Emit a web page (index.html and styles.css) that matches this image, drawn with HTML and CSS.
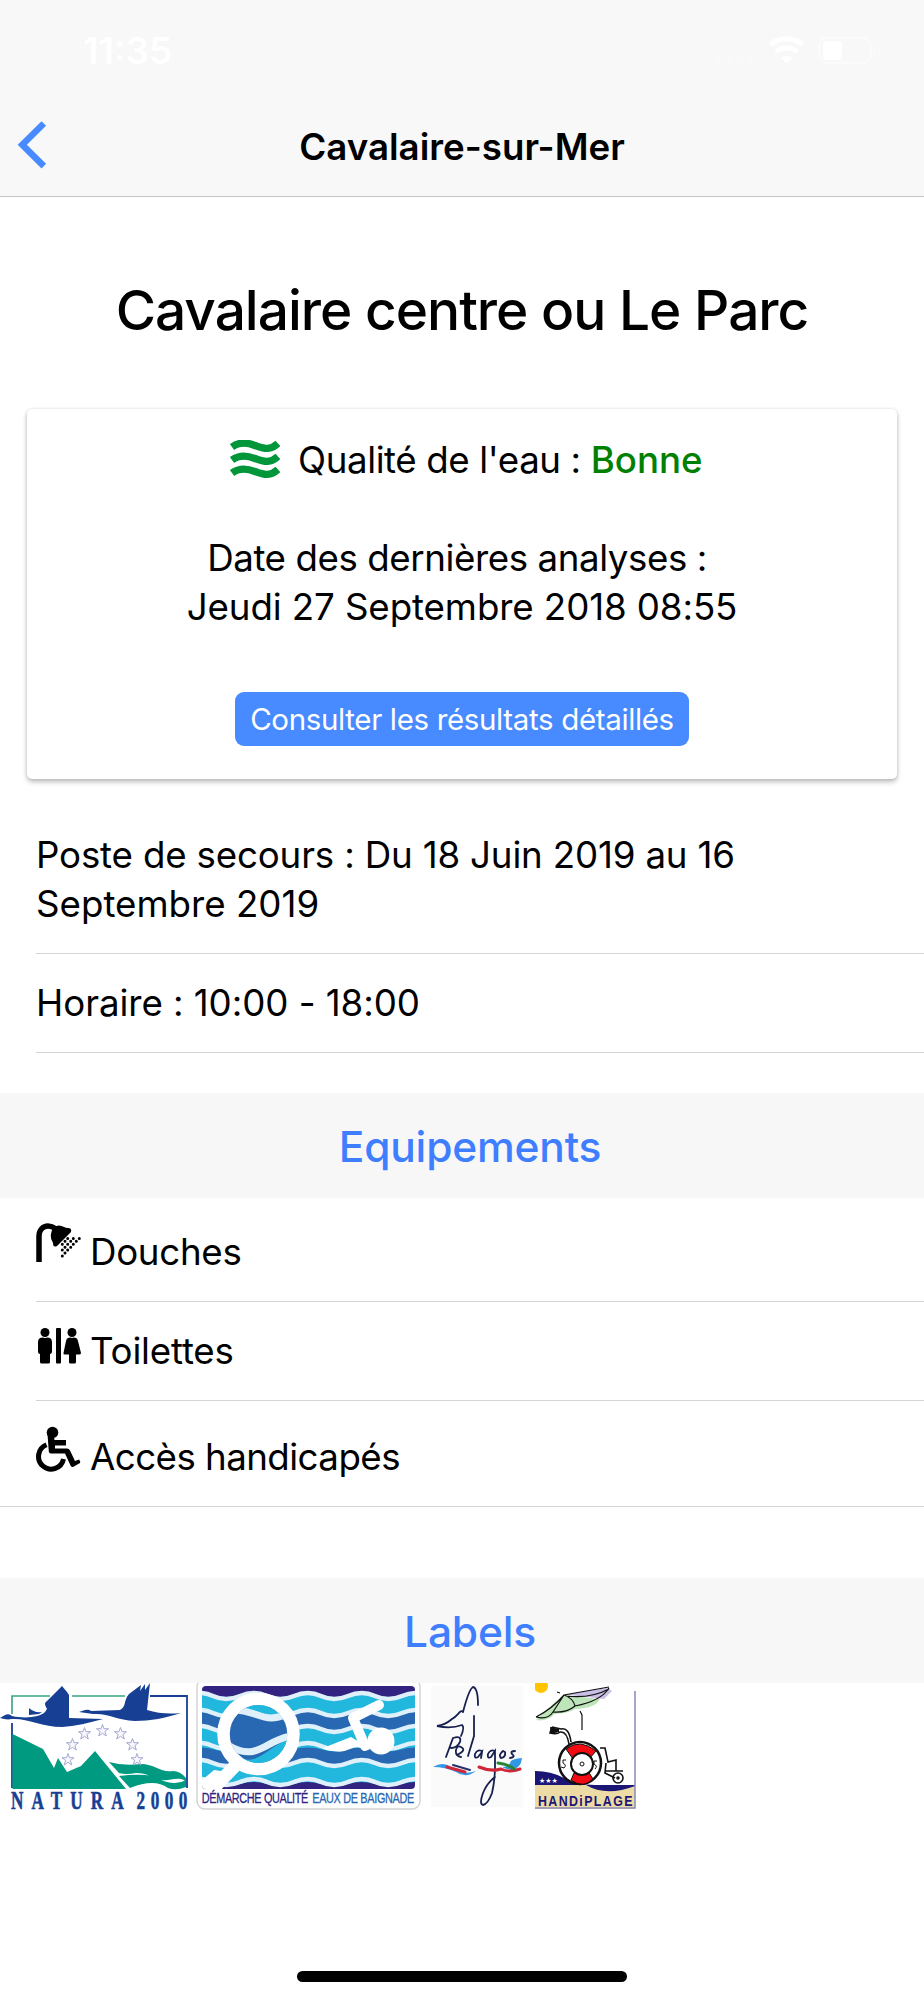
FILE: index.html
```
<!DOCTYPE html>
<html lang="fr">
<head>
    <meta charset="UTF-8">
    <title>Cavalaire-sur-Mer</title>
    <link rel="stylesheet" href="styles.css">
</head>
<body>
    <header class="header">
        <div class="status">
            <span class="time">11:35</span>
            <svg class="status-icons" width="170" height="40" viewBox="0 0 170 40">
                <g fill="#f9f9f9">
                    <circle cx="3" cy="29" r="3"/><circle cx="14" cy="29" r="3"/><circle cx="25" cy="29" r="3"/><circle cx="36" cy="29" r="3"/>
                </g>
                <g fill="none" stroke="#fff" stroke-width="5">
                    <path d="M55 15a25 25 0 0 1 33 0"/>
                    <path d="M61 22a16 16 0 0 1 21 0"/>
                </g>
                <path d="M66 28q5.500-4 11 0l-5.500 5z" fill="#fff"/>
                <rect x="104.500" y="8" width="51" height="25" rx="7" fill="none" stroke="#fbfbfb" stroke-width="2.500"/>
                <rect x="108" y="11" width="19" height="19" rx="4" fill="#fff"/>
                <path d="M159 17q3 3.500 0 8z" fill="#fbfbfb"/>
            </svg>
        </div>
        <div class="navbar">
            <svg class="back" width="30" height="50" viewBox="0 0 30 50"><path d="M25.800 2.500L4.300 23.800l21.500 21.300" fill="none" stroke="#488aff" stroke-width="6.500"/></svg>
            <div class="nav-title"><span>Cavalaire-sur-Mer</span></div>
        </div>
    </header>

    <h1><span>Cavalaire centre ou Le Parc</span></h1>

    <div class="card">
        <div class="quality">
            <svg width="50" height="40" viewBox="0 0 50 40" fill="none" stroke="#009639" stroke-width="7.300">
                <path d="M2 7C8 2.500 15 1.500 25 5.500S41 10 48 3.500"/>
                <path d="M2 20C8 15.500 15 14.500 25 18.500S41 23 48 16.500"/>
                <path d="M2 33C8 28.500 15 27.500 25 31.500S41 36 48 29.500"/>
            </svg>
            <span class="q-label">Qualité de l'eau :</span> <span class="good">Bonne</span>
        </div>
        <p class="date"><span class="d1">Date des dernières analyses :&nbsp;</span><br><span class="d2">Jeudi 27 Septembre 2018 08:55</span></p>
        <button>Consulter les résultats détaillés</button>
    </div>

    <div class="list infos">
        <div class="item poste"><span>Poste de secours : Du 18 Juin 2019 au 16</span><br>Septembre 2019</div>
        <div class="item horaire">Horaire : 10:00 - 18:00</div>
    </div>

    <h2 class="divider equip"><span>Equipements</span></h2>
    <div class="list equipements">
        <div class="item douches">
            <svg width="46" height="40" viewBox="0 0 46 40">
                <path d="M3 39V13C3 7 7 3 12 3q4 0 8 3" fill="none" stroke="#000" stroke-width="5.500"/>
                <path d="M18 4q5-3 10 0 2 1 4 1 4 0 3 4L21 23q-4 2-4-3-5-8 1-16z"/>
                <path d="M31.700 15.500h.01M37.300 15.500h.01M43.300 15.500h.01M29 18.300h.01M34.700 18.300h.01M40.300 18.300h.01M26.300 21.300h.01M31.700 21.300h.01M37.300 21.300h.01M29 24.300h.01M34.700 24.300h.01M26.300 27h.01M31.700 27h.01M29 30h.01M26.300 33h.01" stroke="#000" stroke-width="3" stroke-linecap="round"/>
            </svg>
            <span>Douches</span>
        </div>
        <div class="item toilettes">
            <svg width="46" height="40" viewBox="0 0 46 40">
                <circle cx="9" cy="6.500" r="4.500"/>
                <path d="M4 12q2-1 5 0 3-1 5 0 2 1 2 4v9q0 3-2 3v8q0 1.500-1.500 1.500h-7Q4 37.500 4 36v-8q-2 0-2-3v-9q0-3 2-4z"/>
                <rect x="20" y="2" width="5" height="35.500" rx="1"/>
                <circle cx="36" cy="6.500" r="4.500"/>
                <path d="M32 12q2-1 4 0 2-1 4 0 1.500.5 2 3l3 12q0 1.500-2 1.500h-3V36q0 1.500-1.500 1.500h-4Q33 37.500 33 36v-7.500h-4q-2 0-1.500-1.500L30 15q.5-2.500 2-3z"/>
            </svg>
            <span>Toilettes</span>
        </div>
        <div class="item acces">
            <svg width="46" height="46" viewBox="0 0 46 46">
                <circle cx="16.500" cy="6.500" r="5.800"/>
                <path d="M11.500 8h6l1 6H30v5.500H19v3h12q2 0 3 2l5 10.500 4-1.500q2 2 1 3.500L37 41q-1.500.5-2.500-1.500L29 27.500H15q-2 0-2.200-2z"/>
                <path d="M10.500 18.800A12.600 12.600 0 1 0 27.500 33" fill="none" stroke="#000" stroke-width="5"/>
            </svg>
            <span>Accès handicapés</span>
        </div>
    </div>

    <h2 class="divider labels-title"><span>Labels</span></h2>
    <div class="labels">
        <!-- Natura 2000 -->
        <svg width="190" height="140" viewBox="0 0 190 140">
            <path d="M12 31V13h38M72 13h53" fill="none" stroke="#35a583" stroke-width="1.600"/>
            <path d="M12 40v65M150 13h37v92" fill="none" stroke="#173f94" stroke-width="1.800"/>
            <path d="M12.500 51L43 66l11 19 4-10 9 14 14-6 14-15 31 38H12.500z" fill="#009a80"/>
            <path d="M109 79q14 4 32 2c14 0 20 9 32 7q7 0 13 7v3c-8-5-16 0-24-1-12-3-14-7-26-7q-10 2-17 0zM119 93q15-2 26-1c10 0 20 9 30 8q6 0 11-3v7q-10 4-18 1c-10-7-22-6-38 0z" fill="#009a80"/>
            <g fill="#173f94">
                <path d="M0 35l5-3q4-2 7 1c14 3 28 1 33-4l2-3q-4-6 0-8L62 3l5 6 2 3v23l34 1c-14 4-28 7-41 8-20 0-35-9-50-8-5 1-8 0-12-1zM29 25q5 5 13 4l-3 2-10 1z"/>
                <path d="M79 29l6-2q4-1 6 1l29-1c7-4 3-9 9-16L141 2l-1 6 5-7v6l5-7-3 27q16 5 34 3c-15 5-31 8-46 8-19-1-26-8-42-7z"/>
            </g>
            <g fill="#f7f7fc" stroke="#a6a8d6" stroke-width="1">
                <path id="star" transform="translate(102.500 47.500)" d="M0-6l1.500 4.200H6L2.400 1l1.400 4.500L0 2.800-3.800 5.500-2.400 1-6-1.800h4.500z"/>
                <use href="#star" x="-18" y="3"/><use href="#star" x="18" y="3"/>
                <use href="#star" x="-30" y="14"/><use href="#star" x="30" y="14"/>
                <use href="#star" x="-34.500" y="29"/><use href="#star" x="34.500" y="29"/>
            </g>
            <g class="natura-text" transform="scale(.66 1)"><text x="16.500" y="126.500" textLength="171" lengthAdjust="spacing">NATURA</text><text x="207" y="126.500" textLength="77" lengthAdjust="spacing">2000</text></g>
        </svg>
        <!-- Eaux de baignade -->
        <svg width="226" height="130" viewBox="0 0 226 130">
            <rect x="1" y="-4" width="223" height="130" rx="8" fill="#fff" stroke="#d2d2d2" stroke-width="1.400"/>
            <clipPath id="panel"><rect x="6" y="3" width="213" height="103" rx="4"/></clipPath>
            <g clip-path="url(#panel)">
                <rect x="6" y="3" width="213" height="103" fill="#31237f"/>
                <g fill="none">
                    <path d="M-10 12q14-4 27 0t27 0 27 0 27 0 27 0 27 0 27 0 27 0 27 0V101q-14-4-27 0t-27 0-27 0-27 0-27 0-27 0-27 0-27 0-27 0z" fill="#22b8de"/>
                    <path d="M-10 38q14-4 27 0t27 0 27 0 27 0 27 0 27 0 27 0 27 0 27 0" stroke="#2867b2" stroke-width="14"/>
                    <path d="M-10 73q14-4 27 0t27 0 27 0 27 0 27 0 27 0 27 0 27 0 27 0" stroke="#2867b2" stroke-width="13"/>
                    <g stroke="#dff0fb" stroke-width="4.500">
                        <path id="foam" d="M-10 13q14-6 27 0t27 0 27 0 27 0 27 0 27 0 27 0 27 0 27 0"/>
                        <use href="#foam" y="17"/><use href="#foam" y="33"/><use href="#foam" y="50"/><use href="#foam" y="67"/><use href="#foam" y="86"/>
                    </g>
                </g>
                <circle cx="62.500" cy="51" r="35" fill="#2867b2" stroke="#fff" stroke-width="12.500"/>
                <clipPath id="lens"><circle cx="62.500" cy="51" r="29"/></clipPath>
                <g clip-path="url(#lens)">
                    <path d="M30 20h66v9q-20 8-34 2-12-5-32-6z" fill="#22b8de"/>
                    <path d="M30 64c30 30 38-2 66-8v30H30z" fill="#22b8de"/>
                    <path d="M35 27c28-1 32 17 60 2M30 61c32 20 38-4 65-8" fill="none" stroke="#dff0fb" stroke-width="7"/>
                </g>
                <path d="M37 76l8 10-25 26H-2V104l20-17 7 1z" fill="#fff"/>
                <path d="M183 22l-26 13 12 28" fill="none" stroke="#fff" stroke-width="10" stroke-linecap="round" stroke-linejoin="round"/>
                <path d="M127 65l28-11 20 12-5 1q-8-5-16-1t-16 2q-7 0-11-3z" fill="#fff"/>
                <circle cx="185" cy="58" r="13.500" fill="#fff"/>
            </g>
            <g class="eaux-text" transform="scale(.75 1)">
                <text x="7.800" y="120.500" fill="#31237f" stroke="#31237f" textLength="142" lengthAdjust="spacing">DÉMARCHE QUALITÉ</text>
                <text x="155" y="120.500" fill="#2867b2" stroke="#2867b2" textLength="136" lengthAdjust="spacing">EAUX DE BAIGNADE</text>
            </g>
        </svg>
        <!-- Pelagos -->
        <svg width="92" height="130" viewBox="0 0 92 130" fill="none" stroke-linecap="round">
            <rect y="3" width="92" height="121" fill="#fafafa"/>
            <g stroke="#17204f" stroke-width="1.800">
                <path d="M32 29Q38 6 42 4q5 1 5 18M32 29c-3-3-4 3-11 7Q14 42 6 43q14 3 25-1 3 2-1 11M43 33v20l-6 20M15 74l7-19q9-3 7 4-3 6-9 6"/>
                <path d="M26 72q10-5 4-8-4-2-5 3-1 6 5 7M51 68q-5-2-7 3-1 5 3 3l4-5-1 6M64 68q-5-2-7 3-1 5 3 3l4-6v15q0 14-3 27-4 11-9 12-4-1 0-12 4-10 12-16M72 68q-5 4-2 7 5-1 4-6l-2-1M84 68q-5 0-3 3 4 3-2 4"/>
            </g>
            <path d="M2 84q10-6 18 0 12 9 25 4-10 8-20 1-11-5-23-5zM80 78q2-2 11-3-1 10-10 12-10-2-9-3 6 0 8-6z" fill="#3298e5"/>
            <path d="M16 84l18 5M48 84q12 5 22 2 8 4 19 0" stroke="#cf2638" stroke-width="3"/>
            <path d="M22 82l17 5" stroke="#28306b" stroke-width="2"/>
            <path d="M67 80q10 1 16 6" stroke="#278438" stroke-width="3"/>
        </svg>
        <!-- Handiplage -->
        <svg width="102" height="130" viewBox="0 0 102 130">
            <rect width="102" height="127" fill="#fff"/>
            <circle cx="6" cy="3" r="7" fill="#ffc400"/>
            <path d="M1 37L19 20 29 12l36 4q-4 9-25 10-5 4-20 5-8 8-19 6z" fill="#bee5b9"/>
            <path d="M34 11l38-6 5 3-8 8-35-4z" fill="#c9bee5"/>
            <g fill="none" stroke="#111" stroke-width="1.200">
                <path d="M1 34Q17 26 29 12L74 4M74 5Q66 18 40 23M29 12q9 3 11 11M29 12L18 29M40 23q-8 7-22 6-5 8-17 5M74 6Q55 16 31 13M45 28l2 4v15M22 9l3 1"/>
            </g>
            <g fill="none" stroke="#111" stroke-width="1.600">
                <path d="M17 44l-2 6q7 2 10-1 7-1 9 12M17 44l9 2q8-2 10 13M65 65h5l3 14 8-2v11M70 88h18M71 80l-1 10 10 5"/>
                <circle cx="83" cy="95" r="5"/><circle cx="83" cy="95" r="1"/>
            </g>
            <path d="M15 44l9 2v3l-8 2z" fill="#111"/>
            <path d="M0 88q16 0 29 7 13 7 31 7h40v13H0z" fill="#1b1675"/>
            <path d="M0 102h51q20 12 49 1v23H0z" fill="#eddba6"/>
            <circle cx="45" cy="80" r="21" fill="#fff" stroke="#111" stroke-width="2.500"/>
            <path d="M31 66q14-11 30 2l-7 8q-8-8-16 0zM36 97l3-7q7 4 14-2l5 8q-10 10-22 1z" fill="#f20b12" stroke="#111"/>
            <circle cx="47" cy="81" r="11" fill="#fff" stroke="#111" stroke-width="2"/>
            <circle cx="47" cy="81" r="2" fill="none" stroke="#111"/>
            <path d="M31 77h-3v3q4 2 1 5l-3-1M62 78h-3v3q4 2 1 5" fill="none" stroke="#111"/>
            <text x="4" y="100" class="etoiles">★★★</text>
            <path d="M100 8v117H0" fill="none" stroke="#8988bb" stroke-width="1.500"/>
            <text x="3.800" y="123" class="handi" transform="scale(.8 1)" textLength="118" lengthAdjust="spacing">HANDiPLAGE</text>
        </svg>
    </div>
    <div class="home-indicator"></div>
</body>
</html>
```
FILE: styles.css
```
* {
    box-sizing: border-box;
}
body {
    margin: 0;
    height: 2000px;
    display: flex;
    flex-direction: column;
    overflow: hidden;
    background: #fff;
    color: #000;
    font-family: Inter, "Liberation Sans", sans-serif;
    font-size: 36.7px;
    line-height: 49px;
}
svg {
    flex: none;
    display: block;
}
.header {
    flex: none;
    height: 197px;
    background: #f8f8f8;
    border-bottom: 1px solid #c4c4c4;
}
.status {
    height: 100px;
    padding: 26px 39px 0 83px;
    display: flex;
    justify-content: space-between;
    align-items: flex-start;
    color: #fff;
    font-weight: 600;
}
.status-icons {
    margin-top: 4px;
}
.navbar {
    height: 92px;
    display: flex;
    align-items: center;
    padding: 0 48px 0 18px;
}
.back {
    overflow: visible;
}
.nav-title {
    flex: 1;
    text-align: center;
    font-weight: 600;
}
h1 {
    flex: none;
    margin: 0;
    height: 212px;
    padding-top: 78px;
    line-height: 70px;
    font-size: 55px;
    font-weight: 500;
    letter-spacing: -1px;
    text-align: center;
    white-space: nowrap;
}
.card {
    flex: none;
    height: 370px;
    margin: 0 27px;
    padding-top: 26px;
    border-radius: 5px;
    box-shadow: 0 3px 5px rgba(0, 0, 0, .25), 0 0 3px rgba(0, 0, 0, .12);
    text-align: center;
    white-space: nowrap;
}
.quality {
    display: flex;
    align-items: center;
    padding-left: 203px;
}
.q-label {
    margin-left: 18px;
    letter-spacing: -.4px;
}
.good {
    margin-left: 10px;
    color: #008000;
    font-weight: 500;
}
.date {
    margin: 49px 0 61px;
}
.d1 {
    letter-spacing: -.42px;
}
.d2 {
    letter-spacing: -.1px;
}
button {
    display: block;
    margin: 0 auto;
    width: 454px;
    height: 54px;
    padding: 0;
    border: 0;
    border-radius: 9px;
    background: #488aff;
    color: #fff;
    font: 29.5px Inter, sans-serif;
    letter-spacing: -.35px;
}
.list {
    flex: none;
}
.infos {
    height: 314px;
    padding: 51px 0 0 36px;
}
.item {
    border-bottom: 1px solid #d4d4d4;
    white-space: nowrap;
}
.poste {
    height: 124px;
}
.poste span {
    letter-spacing: -.17px;
}
.horaire {
    height: 99px;
    padding-top: 24px;
    letter-spacing: -.06px;
}
.divider {
    flex: none;
    margin: 0;
    height: 105px;
    padding-left: 16px;
    background: #f7f7f7;
    color: #3f7fff;
    font-size: 42.5px;
    font-weight: 500;
    letter-spacing: -.2px;
    line-height: 108px;
    text-align: center;
}
.equipements {
    height: 380px;
}
.equipements .item {
    display: flex;
    margin-left: 36px;
}
.equipements svg {
    margin-right: 8px;
}
.douches {
    height: 104px;
    padding-top: 25px;
    letter-spacing: -.3px;
}
.douches span {
    margin-top: 4px;
}
.toilettes {
    height: 99px;
    padding-top: 24px;
    letter-spacing: -.2px;
}
.equipements .acces {
    height: 106px;
    margin-left: 0;
    padding: 25px 0 0 36px;
    letter-spacing: -.55px;
}
.acces span {
    margin-top: 6px;
}
.labels {
    flex: none;
    height: 288px;
    display: flex;
    align-items: flex-start;
}
.labels svg:nth-child(2) {
    margin-left: 6px;
}
.labels svg:nth-child(3) {
    margin-left: 9px;
}
.labels svg:nth-child(4) {
    margin-left: 12px;
}
.natura-text {
    font: bold 26px "Liberation Serif", serif;
    fill: #173f94;
    stroke: #173f94;
    stroke-width: .6px;
}
.eaux-text {
    font: 14.5px "Liberation Sans", sans-serif;
    stroke-width: .3px;
}
.etoiles {
    font: 7px "DejaVu Sans", sans-serif;
    fill: #fff;
}
.handi {
    font: bold 15.5px "Liberation Sans", sans-serif;
    fill: #1b1675;
}
.home-indicator {
    flex: none;
    width: 330px;
    height: 11px;
    margin: 0 auto;
    border-radius: 6px;
    background: #000;
}
```
